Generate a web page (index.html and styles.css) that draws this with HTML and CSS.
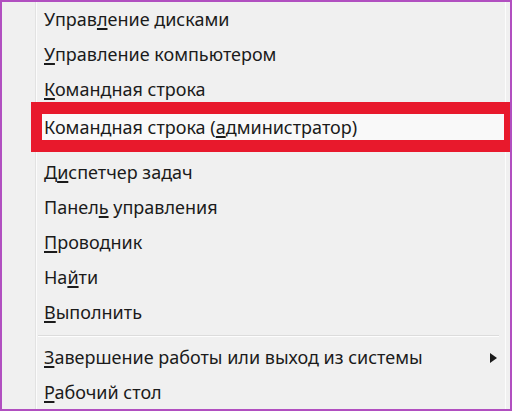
FILE: index.html
```html
<!DOCTYPE html>
<html lang="ru">
<head>
    <meta charset="UTF-8">
    <meta name="viewport" content="width=device-width, initial-scale=1.0">
    <title>Меню Win+X</title>
    <link rel="stylesheet" href="styles.css">
</head>
<body>
    <div class="menu">
        <div class="gutter"></div>

        <!-- Menu items -->
        <ul class="items">
            <li class="item">Управ<u>л</u>ение дисками</li>
            <li class="item"><u>У</u>правление компьютером</li>
            <li class="item"><u>К</u>омандная строка</li>
            <li class="item marked"><span class="marked-inner">Командная строка (<u>а</u>дминистратор)</span></li>
            <li class="item">Д<u>и</u>спетчер задач</li>
            <li class="item">Панел<u>ь</u> управления</li>
            <li class="item"><u>П</u>роводник</li>
            <li class="item">На<u>й</u>ти</li>
            <li class="item"><u>В</u>ыполнить</li>
            <li class="separator"></li>
            <li class="item submenu"><span><u>З</u>авершение работы или выход из системы</span> <span class="arrow"></span></li>
            <li class="item"><u>Р</u>абочий стол</li>
        </ul>
    </div>
</body>
</html>
```

FILE: styles.css
```css
* {
    margin: 0;
    padding: 0;
    box-sizing: border-box;
}

body {
    width: 512px;
    height: 411px;
    overflow: hidden;
    background: #f0f0f0;
    font-family: 'Noto Sans', 'Open Sans', Arial, sans-serif;
    color: #1b1b1b;
}

/* Menu frame */
.menu {
    display: flex;
    width: 512px;
    height: 411px;
    border: 2px solid #b14fc0;
    background: #f0f0f0;
    overflow: hidden;
}

.gutter {
    width: 35px;
    flex-shrink: 0;
    border-right: 1px solid #fbfbfb;
    box-shadow: inset -1px 0 0 #e2e2e2;
}

/* Items */
.items {
    flex: 1;
    list-style: none;
    border-right: 1px solid #fcfcfc;
    margin-right: 4px;
}

.item {
    height: 35px;
    line-height: 35px;
    padding-left: 7px;
    font-size: 18px;
    white-space: nowrap;
}

.item u {
    text-decoration-thickness: 2px;
    text-underline-offset: 2px;
}

/* Red highlight box */
.marked {
    height: 50px;
    margin: -5px -5px 3px -6px;
    padding: 0;
    border-style: solid;
    border-color: #e8192c;
    border-width: 12px 6px 12px 11px;
    background: #f9f9f9;
}

.marked-inner {
    display: block;
    padding-left: 2px;
    line-height: 26px;
}

.separator {
    height: 2px;
    margin: 5px 6px 3px 1px;
    border-top: 1px solid #dcdcdc;
    border-bottom: 1px solid #fdfdfd;
}

.submenu {
    display: flex;
    align-items: center;
}

.arrow {
    width: 0;
    height: 0;
    margin-left: auto;
    margin-right: 8px;
    border-top: 5px solid transparent;
    border-bottom: 5px solid transparent;
    border-left: 7px solid #1b1b1b;
}
```
